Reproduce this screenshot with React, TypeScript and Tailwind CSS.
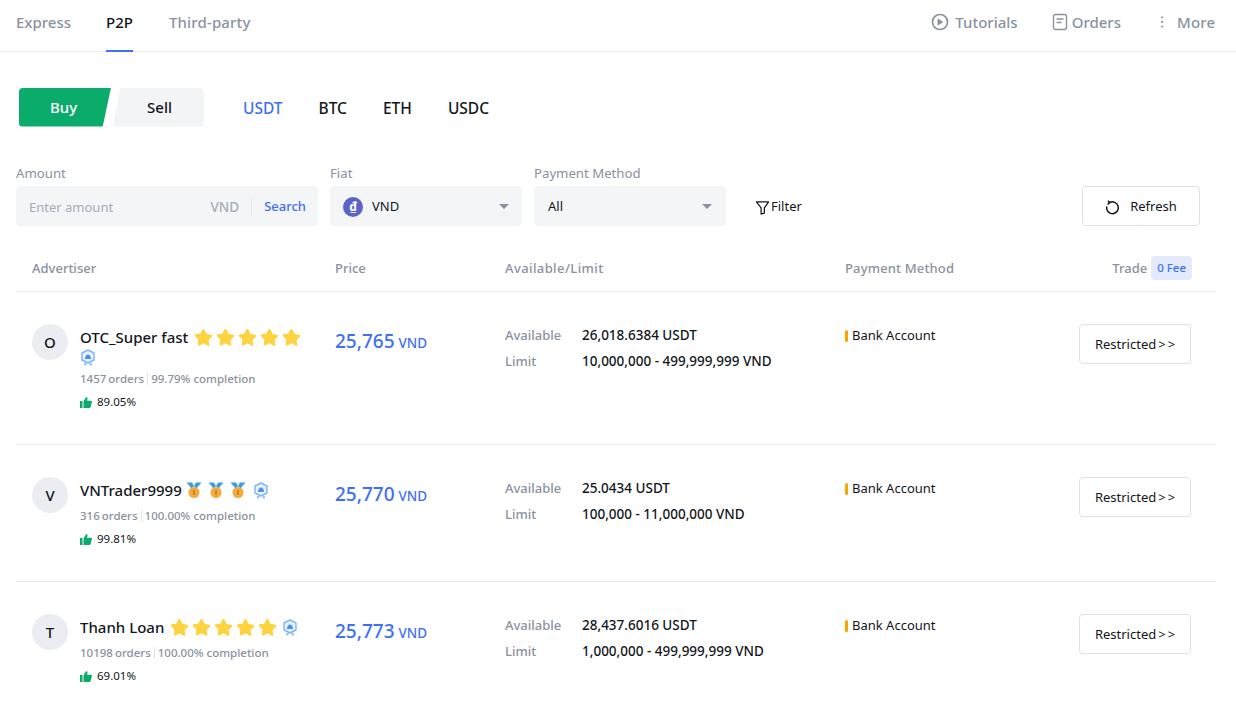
import { MoreVertical } from "lucide-react";

type Badge = "star" | "medal";

type Ad = {
  initial: string;
  name: string;
  badge: Badge;
  wrapShield: boolean;
  orders: string;
  completion: string;
  rate: string;
  price: string;
  available: string;
  limit: string;
};

const ads: Ad[] = [
  {
    initial: "O",
    name: "OTC_Super fast",
    badge: "star",
    wrapShield: true,
    orders: "1457 orders",
    completion: "99.79% completion",
    rate: "89.05%",
    price: "25,765",
    available: "26,018.6384 USDT",
    limit: "10,000,000 - 499,999,999 VND",
  },
  {
    initial: "V",
    name: "VNTrader9999",
    badge: "medal",
    wrapShield: false,
    orders: "316 orders",
    completion: "100.00% completion",
    rate: "99.81%",
    price: "25,770",
    available: "25.0434 USDT",
    limit: "100,000 - 11,000,000 VND",
  },
  {
    initial: "T",
    name: "Thanh Loan",
    badge: "star",
    wrapShield: false,
    orders: "10198 orders",
    completion: "100.00% completion",
    rate: "69.01%",
    price: "25,773",
    available: "28,437.6016 USDT",
    limit: "1,000,000 - 499,999,999 VND",
  },
];

const Star = () => (
  <svg width="19" height="18" viewBox="0 0 24 24" className="mr-[3px]">
    <path
      d="M12 1.5c.6 0 1.1.3 1.4.9l2.8 5.6 6.1.9c1.300.2 1.800 1.800.9 2.700l-4.400 4.300 1 6.100c.2 1.300-1.100 2.300-2.300 1.700L12 20.300l-5.500 2.900c-1.200.6-2.500-.4-2.300-1.700l1-6.100-4.400-4.300c-.9-.9-.4-2.500.9-2.700l6.100-.9 2.800-5.600c.3-.6.8-.9 1.400-.9z"
      fill="#fdd33f"
    />
  </svg>
);

const Medal = () => (
  <svg width="18" height="18" viewBox="0 0 18 18" className="mr-1">
    <path d="M1.500 1.500H7l2 3.500-2.500 2.500z" fill="#3f9fdc" />
    <path d="M16.500 1.500H11L9 5l2.500 2.500z" fill="#3f9fdc" />
    <circle cx="9" cy="11.500" r="5.500" fill="#f2ab3c" />
    <rect x="8.400" y="9.200" width="1.200" height="4.600" fill="#a9691a" />
  </svg>
);

const Shield = () => (
  <svg width="16" height="17" viewBox="0 0 16 17">
    <path d="M4 14h2.500v2.500H4zM9.500 14H12v2.500H9.500z" fill="#9cc7f8" />
    <path d="M8 1l6 3v7l-6 3-6-3V4z" fill="#e6f1fe" stroke="#7fb6f5" strokeWidth="1.400" strokeLinejoin="round" />
    <path d="M5 10c0-3 1.500-4.500 3-4.500S11 7 11 10z" fill="#4a90f0" />
  </svg>
);

const Thumb = () => (
  <svg width="12" height="11" viewBox="0 0 12 11" className="mr-[5px]">
    <rect x="0" y="4" width="2.500" height="7" fill="#0bab6c" />
    <path d="M3.500 4.500 6 .2c1-.3 1.800.5 1.500 1.600L7 3.800h3.800c.9 0 1.300.7 1.100 1.500l-1.300 4.800c-.2.600-.6.900-1.200.900H3.500z" fill="#0bab6c" />
  </svg>
);

const Caret = () => (
  <span className="-mt-[2px] h-0 w-0 border-x-[5px] border-t-[5px] border-x-transparent border-t-[#8a919f]" />
);

const Row = ({ ad, tall }: { ad: Ad; tall: boolean }) => (
  <div className={`flex border-b border-[#e9ebef] pl-4 pr-[25px] pt-8 ${tall ? "h-[153px]" : "h-[137px]"}`}>
    <div className="flex w-[303px] shrink-0">
      <div className="mr-3 flex h-9 w-9 shrink-0 items-center justify-center rounded-full bg-[#ebedf2] text-[15px] font-medium text-[#12161c]">
        {ad.initial}
      </div>
      <div className="w-[224px]">
        <div className="-mt-[1px] flex h-[28px] items-center text-[15px] font-medium text-[#12161c]">
          <span className={`whitespace-nowrap ${ad.badge === "star" ? "mr-[6px]" : "mr-[3px]"}`}>{ad.name}</span>
          {ad.badge === "star" ? [0, 1, 2, 3, 4].map((i) => <Star key={i} />) : [0, 1, 2].map((i) => <Medal key={i} />)}
          {!ad.wrapShield && <span className="ml-0.5"><Shield /></span>}
        </div>
        {ad.wrapShield && (
          <div className="-mt-[2px] h-[18px]">
            <Shield />
          </div>
        )}
        <div className="mt-1 flex items-center text-[11.500px] font-medium leading-4 text-[#8a919f]">
          <span className="[word-spacing:-1px]">{ad.orders}</span>
          <span className="mx-[3px] h-3 w-px bg-[#e1e3e8]" />
          <span>{ad.completion}</span>
        </div>
        <div className="mt-[7px] flex items-center text-[11.500px] leading-4 text-[#12161c]">
          <Thumb />
          {ad.rate}
        </div>
      </div>
    </div>
    <div className="w-[170px] shrink-0 pt-[5px] text-[#3e70f6]">
      <span className="text-[19px] font-medium leading-6">{ad.price}</span>
      <span className="ml-1 text-[13.500px] font-medium">VND</span>
    </div>
    <div className="w-[340px] shrink-0 text-[13px] leading-[26px]">
      <div className="-mt-[2px] flex">
        <span className="w-[77px] font-medium text-[#8a919f]">Available</span>
        <span className="text-[13.500px] font-medium text-[#12161c]">{ad.available}</span>
      </div>
      <div className="flex">
        <span className="w-[77px] font-medium text-[#8a919f]">Limit</span>
        <span className="text-[13.500px] font-medium text-[#12161c]">{ad.limit}</span>
      </div>
    </div>
    <div className="-mt-[1px] flex h-[26px] flex-1 items-center text-[13px] text-[#12161c]">
      <span className="mr-1 h-3 w-[3px] rounded-sm bg-[#f7a600]" />
      Bank Account
    </div>
    <button className="flex h-10 w-28 shrink-0 items-center justify-center rounded border border-[#dfe1e6] bg-white pt-[2px] text-[13px] text-[#12161c]">
      Restricted
      <span className="ml-[2px]">&gt;</span>
      <span className="ml-[2px]">&gt;</span>
    </button>
  </div>
);

export default function App() {
  return (
    <div className="h-[710px] w-[1236px] overflow-hidden bg-white font-['Noto_Sans',sans-serif]">
      <div className="flex h-[52px] items-stretch justify-between border-b border-[#e9ebef] pl-4 pr-5 text-[15px] font-medium text-[#8a919f]">
        <div className="flex">
          <div className="pt-[11px]">Express</div>
          <div className="relative ml-[35px] pt-[11px] text-[#12161c]">
            P2P
            <span className="absolute bottom-[-1px] left-0 h-0.5 w-full bg-[#3e70f6]" />
          </div>
          <div className="ml-9 pt-[11px] tracking-[0.15px]">Third-party</div>
        </div>
        <div className="flex items-start pt-[11px]">
          <div className="flex items-center">
            <svg width="18" height="18" viewBox="0 0 18 18" fill="none" stroke="#8a919f" strokeWidth="1.700" className="mr-[6px]">
              <circle cx="9" cy="9" r="7.500" />
              <path d="M7 6l4.500 3L7 12z" fill="#8a919f" strokeWidth="1" strokeLinejoin="round" />
            </svg>
            Tutorials
          </div>
          <div className="ml-[34px] flex items-center">
            <svg width="16" height="18" viewBox="0 0 16 18" fill="none" stroke="#8a919f" strokeWidth="1.400" className="mr-1">
              <rect x="1.500" y="1.500" width="13" height="15" rx="2" />
              <path d="M4.500 6h7M4.500 9.500h5" />
            </svg>
            Orders
          </div>
          <div className="ml-[33px] flex items-center">
            <MoreVertical size={16} strokeWidth={1.500} className="mr-[7px] text-[#8a919f]" />
            <span className="w-[39px] tracking-[0.2px]">More</span>
          </div>
        </div>
      </div>

      <div className="mt-[35px] flex h-[40px] items-center pl-[19px]">
        <div className="flex h-[39px] w-[185px] text-[15px] font-medium">
          <div className="flex h-full w-[92px] items-center justify-center rounded-l bg-[#0bab6c] pr-[3px] text-white [clip-path:polygon(0_0,100%_0,91%_100%,0_100%)]">
            Buy
          </div>
          <div className="ml-[2px] flex h-full w-[91px] items-center justify-center rounded-r bg-[#f3f4f6] pl-[2px] text-[#12161c] [clip-path:polygon(8%_0,100%_0,100%_100%,0_100%)]">
            Sell
          </div>
        </div>
        <div className="ml-[39px] mt-1 flex gap-9 text-[15.500px] font-medium text-[#12161c]">
          <span className="text-[#3e70f6]">USDT</span>
          <span>BTC</span>
          <span>ETH</span>
          <span>USDC</span>
        </div>
      </div>

      <div className="mt-9 flex items-end pl-4 pr-9 text-[13px]">
        <div className="mr-3 w-[302px]">
          <div className="mb-[3px] text-[13.200px] leading-[20px] text-[#8a919f]">Amount</div>
          <div className="flex h-10 items-center rounded bg-[#f4f5f7] pl-[13px] pr-3 pt-[2px]">
            <span className="flex-1 pt-[2px] text-[#a5acb8]">Enter amount</span>
            <span className="text-[13.500px] font-medium text-[#a5acb8]">VND</span>
            <span className="mx-3 h-5 w-px bg-[#e6e8ec]" />
            <span className="font-medium text-[#3e70f6]">Search</span>
          </div>
        </div>
        <div className="mr-3 w-[192px]">
          <div className="mb-[3px] text-[13.200px] leading-[20px] text-[#8a919f]">Fiat</div>
          <div className="flex h-10 items-center rounded bg-[#f4f5f7] pl-[13px] pr-[13px] pt-[2px] text-[#12161c]">
            <span className="mr-[9px] flex h-5 w-5 items-center justify-center rounded-full bg-[#5b63c9] text-[12px] font-bold leading-none text-white">
              ₫
            </span>
            <span className="flex-1">VND</span>
            <Caret />
          </div>
        </div>
        <div className="w-[192px]">
          <div className="mb-[3px] text-[13.200px] leading-[20px] text-[#8a919f]">Payment Method</div>
          <div className="flex h-10 items-center justify-between rounded bg-[#f4f5f7] pl-[14px] pr-[14px] pt-[2px] text-[#12161c]">
            <span>All</span>
            <Caret />
          </div>
        </div>
        <div className="ml-[29px] flex h-10 items-center pt-[2px] text-[#12161c]">
          <svg width="15" height="15" viewBox="0 0 16 16" fill="none" stroke="#12161c" strokeWidth="1.300" strokeLinejoin="round" className="mr-[1px]">
            <path d="M1.500 2h13L10 8.500V14l-3.500 1V8.500z" />
          </svg>
          Filter
        </div>
        <button className="ml-auto flex h-10 w-[118px] items-center justify-center rounded border border-[#dfe1e6] bg-white pt-[2px] text-[#12161c]">
          <svg width="15" height="15" viewBox="0 0 14 14" fill="none" stroke="#12161c" strokeWidth="1.400" className="mr-[10px]">
            <path d="M4.200 2.500A5.500 5.500 0 1 1 1.600 6" />
            <path d="M2.800 .6l1.600 1.900-2 1.500" />
          </svg>
          Refresh
        </button>
      </div>

      <div className="mx-4 mt-[20px] flex h-[46px] w-[1200px] items-center border-b border-[#e9ebef] pb-[1px] text-[13px] font-medium text-[#8a919f]">
        <div className="mt-[2px] w-[319px] pl-4">Advertiser</div>
        <div className="mt-[2px] w-[170px]">Price</div>
        <div className="mt-[2px] w-[340px] tracking-[0.4px]">Available/Limit</div>
        <div className="mt-[2px] flex-1 tracking-[0.15px]">Payment Method</div>
        <div className="flex items-center pr-6">
          <span className="mt-[2px]">Trade</span>
          <span className="ml-[4px] rounded bg-[#e2eafb] px-[6px] py-[3px] text-[11.500px] leading-[18px] text-[#3e70f6]">0 Fee</span>
        </div>
      </div>

      <div className="mx-4 flex w-[1200px] flex-col">
        {ads.map((ad, i) => (
          <Row key={ad.name} ad={ad} tall={i === 0} />
        ))}
      </div>
    </div>
  );
}
